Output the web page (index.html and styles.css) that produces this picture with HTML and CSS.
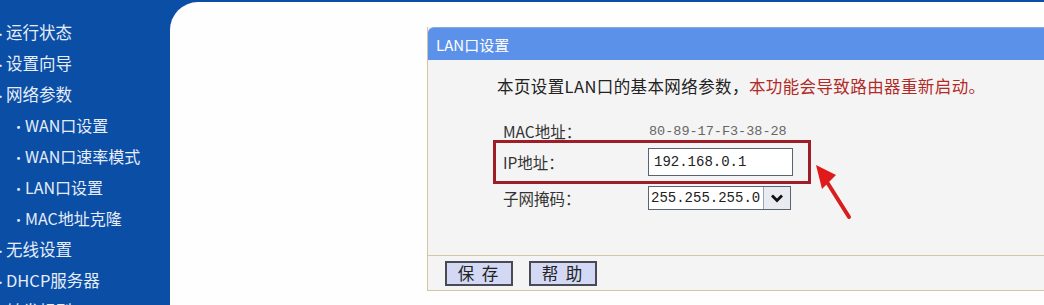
FILE: index.html
```html
<!DOCTYPE html>
<html lang="zh-CN">
<head>
<meta charset="utf-8">
<title>LAN口设置</title>
<link rel="stylesheet" href="styles.css">
</head>
<body>
<div class="page">
  <nav class="sidebar">
    <ul class="menu">
      <li class="top">运行状态</li>
      <li class="top">设置向导</li>
      <li class="top">网络参数</li>
      <li class="sub">WAN口设置</li>
      <li class="sub">WAN口速率模式</li>
      <li class="sub">LAN口设置</li>
      <li class="sub">MAC地址克隆</li>
      <li class="top">无线设置</li>
      <li class="top">DHCP服务器</li>
      <li class="top">转发规则</li>
    </ul>
  </nav>
  <main class="main">
    <section class="panel">
      <div class="panel-head">LAN口设置</div>
      <div class="panel-body">
        <p class="intro">本页设置LAN口的基本网络参数，<span class="warn">本功能会导致路由器重新启动。</span></p>
        <div class="form">
          <div class="row">
            <span class="label">MAC地址：</span>
            <span class="mac">80-89-17-F3-38-28</span>
          </div>
          <div class="row highlight">
            <span class="label">IP地址：</span>
            <span class="input">192.168.0.1</span>
          </div>
          <div class="row">
            <span class="label">子网掩码：</span>
            <span class="select"><span class="select-val">255.255.255.0</span><span class="select-btn"><svg width="14" height="10" viewBox="0 0 14 10"><path d="M2 2.5 L7 7.5 L12 2.5" fill="none" stroke="#111" stroke-width="2.8"/></svg></span></span>
          </div>
        </div>
        <svg class="arrow" width="60" height="70" viewBox="0 0 60 70">
          <path d="M40 58 L18 23" stroke="#d61f1f" stroke-width="4" stroke-linecap="round" fill="none"/>
          <path d="M7 6 L27 16 L13 30 Z" fill="#e01a1a"/>
        </svg>
      </div>
      <div class="panel-foot">
        <button class="btn">保&nbsp;存</button>
        <button class="btn">帮&nbsp;助</button>
      </div>
    </section>
  </main>
</div>
</body>
</html>
```

FILE: styles.css
```css
html, body {
  margin: 0;
  padding: 0;
  height: 305px;
  overflow: hidden;
}
body {
  background: #0b4ea6;
  font-family: "Noto Sans CJK SC", "Liberation Sans", sans-serif;
  font-size: 16.5px;
}
.page {
  display: flex;
  height: 305px;
  overflow: hidden;
}
.sidebar {
  width: 170px;
  flex: none;
  background: #0b4ea6;
  color: #e6edf8;
  overflow: hidden;
}
.menu {
  list-style: none;
  margin: 0;
  padding: 17px 0 0 0;
}
.menu li {
  line-height: 31px;
  height: 31px;
  white-space: nowrap;
}
.menu .top {
  padding-left: 8px;
}
.menu .top::before {
  content: "•";
  display: inline-block;
  width: 11px;
  margin-left: -13px;
  font-size: 11px;
}
.menu .sub {
  padding-left: 27px;
  font-size: 16px;
}
.menu .sub::before {
  content: "•";
  display: inline-block;
  width: 13px;
  margin-left: -15px;
  font-size: 13px;
}
.main {
  flex: 1;
  min-width: 0;
  margin-top: 2px;
  background: #fefefe;
  border-top-left-radius: 28px;
  padding: 25px 0 0 257px;
  overflow: hidden;
}
.panel {
  width: 720px;
  border-left: 1px solid #d3c6a6;
  border-bottom: 1px solid #d3c6a6;
  background: #f4f4f4;
}
.panel-head {
  height: 33px;
  line-height: 33px;
  background: #5b91e8;
  color: #ffffff;
  padding-left: 8px;
  font-size: 15px;
  border-top-left-radius: 6px;
  border-top: 1px solid #8aa8d8;
  box-sizing: border-box;
}
.panel-body {
  position: relative;
  height: 196px;
  padding: 14px 0 0 0;
  box-sizing: border-box;
  border-bottom: 1px solid #d3c6a6;
}
.intro {
  margin: 0 0 22px 0;
  padding-left: 69px;
  line-height: 24px;
  color: #222;
  letter-spacing: 0.4px;
}
.warn {
  color: #b22a28;
}
.form {
  margin-left: 65px;
  width: 318px;
  display: flex;
  flex-direction: column;
}
.row {
  display: grid;
  grid-template-columns: 145px auto;
  align-items: center;
  padding-left: 10px;
  height: 20px;
  color: #333;
  font-size: 15.5px;
}
.row .label {
  white-space: nowrap;
}
.mac {
  font-family: "Liberation Mono", monospace;
  font-size: 13.5px;
  color: #666;
  padding-left: 1px;
}
.row.highlight {
  height: 44px;
  box-sizing: border-box;
  border: 3px solid #9e1e28;
  padding-left: 7px;
}
.row:last-child {
  margin-top: 2px;
  height: 24px;
}
.input {
  width: 145px;
  height: 28px;
  box-sizing: border-box;
  border: 1px solid #5a6470;
  background: #fff;
  font-family: "Liberation Mono", monospace;
  font-size: 14px;
  line-height: 26px;
  padding-left: 5px;
  color: #222;
}
.select {
  display: flex;
  width: 143px;
  height: 24px;
  box-sizing: border-box;
  border: 1px solid #5a6470;
  background: #fff;
}
.select-val {
  flex: 1;
  font-family: "Liberation Mono", monospace;
  font-size: 14px;
  line-height: 22px;
  padding-left: 2px;
  color: #222;
  white-space: nowrap;
}
.select-btn {
  width: 26px;
  border-left: 1px solid #9aa4b0;
  background: #e8ecf2;
  display: flex;
  align-items: center;
  justify-content: center;
}
.arrow {
  position: absolute;
  left: 381px;
  top: 99px;
}
.panel-foot {
  height: 34px;
  display: flex;
  align-items: center;
  gap: 16px;
  padding-left: 17px;
}
.btn {
  width: 68px;
  height: 25px;
  padding: 0;
  border: 2px solid #4a4a55;
  background: #d3d9f4;
  font-family: "Noto Sans CJK SC", sans-serif;
  font-size: 16.5px;
  line-height: 21px;
  letter-spacing: 2px;
  color: #222;
}
```
